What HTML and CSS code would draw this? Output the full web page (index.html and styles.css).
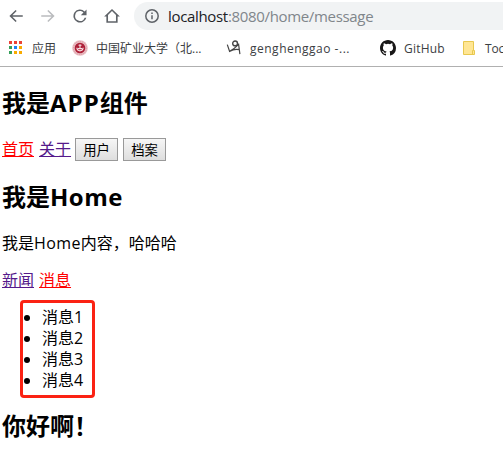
FILE: index.html
```html
<!DOCTYPE html>
<html lang="zh-CN">
<head>
<meta charset="utf-8">
<title>localhost:8080/home/message</title>
<link rel="stylesheet" href="styles.css">
</head>
<body>
<header class="browser">
  <div class="toolbar">
    <svg class="nav-icon" viewBox="0 0 24 24"><path d="M21 11H7.2l5.7-5.7L11.5 4l-8.3 8 8.3 8 1.4-1.4L7.2 13H21z"/></svg>
    <svg class="nav-icon disabled" viewBox="0 0 24 24"><path d="M12.5 4l-1.4 1.4 5.7 5.6H3v2h13.8l-5.7 5.6 1.4 1.4 8.3-8z"/></svg>
    <svg class="nav-icon" viewBox="1 1 22 22"><path d="M17.65 6.35A8 8 0 1 0 19.73 14h-2.08A6 6 0 1 1 12 6c1.66 0 3.14.69 4.22 1.78L13 11h7V4l-2.35 2.35z"/></svg>
    <svg class="nav-icon" viewBox="0 0 24 24"><path fill-rule="evenodd" d="M12 2.5L1.5 12.8h3V21h15v-8.2h3L12 2.5zM12 5.3l5.3 5.3V19H6.7v-8.4L12 5.3z"/></svg>
    <div class="address">
      <svg class="info" viewBox="0 0 16 16"><circle cx="8" cy="8" r="6.2"/><path d="M8 7.2v4M8 4.5v1.5"/></svg>
      <span class="url"><span class="host">localhost</span>:8080/home/message</span>
    </div>
  </div>
  <nav class="bookmarks">
    <a class="bookmark apps"><svg class="icon" viewBox="0 0 14 14"><path fill="#ea4335" d="M0 0h3v3H0zM5 0h3v3H5zM10 0h3v3h-3z"/><path fill="#34a05a" d="M0 5h3v3H0zM0 10h3v3H0z"/><path fill="#1a83f7" d="M5 5h3v3H5z"/><path fill="#f9ab00" d="M10 5h3v3h-3zM5 10h3v3H5zM10 10h3v3h-3z"/></svg><span>应用</span></a>
    <a class="bookmark school"><svg class="icon" viewBox="0 0 16 16"><circle cx="8" cy="8" r="7.8" fill="#e9bcc2"/><circle cx="8" cy="8" r="6.5" fill="none" stroke="#dc9ba4" stroke-dasharray="1 1"/><circle cx="8" cy="8" r="5.3" fill="#ad2038"/><path fill="none" stroke="#f6dfe2" stroke-width="1.1" d="M4.8 7.8c.4 4.1 6 4.1 6.4 0M8 4.2v5M6.5 5.3h3M5.9 8.6h4.2"/></svg><span>中国矿业大学（北...</span></a>
    <a class="bookmark blog"><svg class="icon" viewBox="0 0 16 16"><g fill="none" stroke="#444" stroke-width="1.4"><circle cx="9.1" cy="3.4" r="2.4"/><path d="M1.3 4.6l2.3 6.8c3-1.6 6.2-4 9-7l1.3 9.8M4 11.2c3-2 6-2.3 9.6-1.6" stroke-width="1.2"/></g></svg><span>genghenggao -...</span></a>
    <a class="bookmark github"><svg class="icon" viewBox="0 0 16 16"><path fill="#181717" d="M8 0C3.58 0 0 3.58 0 8c0 3.54 2.29 6.53 5.47 7.59.4.07.55-.17.55-.38 0-.19-.01-.82-.01-1.49-2.01.37-2.53-.49-2.69-.94-.09-.23-.48-.94-.82-1.13-.28-.15-.68-.52-.01-.53.63-.01 1.08.58 1.23.82.72 1.21 1.87.87 2.33.66.07-.52.28-.87.51-1.07-1.78-.2-3.64-.89-3.64-3.95 0-.87.31-1.59.82-2.15-.08-.2-.36-1.02.08-2.12 0 0 .67-.21 2.2.82a7.6 7.6 0 0 1 4 0c1.53-1.04 2.2-.82 2.2-.82.44 1.1.16 1.92.08 2.12.51.56.82 1.27.82 2.15 0 3.07-1.87 3.75-3.65 3.95.29.25.54.73.54 1.48 0 1.07-.01 1.93-.01 2.2 0 .21.15.46.55.38A8.01 8.01 0 0 0 16 8c0-4.42-3.58-8-8-8z"/></svg><span>GitHub</span></a>
    <a class="bookmark folder"><svg class="icon" viewBox="0 0 13 15"><path fill="#ffe694" stroke="#e8c84f" d="M.5.5h10v9h1v4H.5zM9.5 13.5v-4h1"/></svg><span>Toc</span></a>
  </nav>
</header>
<main>
  <h2>我是<span class="app-word">APP</span>组件</h2>
  <div class="links main-links"><a class="active">首页</a><a>关于</a><button>用户</button><button>档案</button></div>
  <h2 class="home-title">我是<span class="home-word">Home</span></h2>
  <p>我是<span class="home-text">Home</span>内容，哈哈哈</p>
  <div class="links"><a>新闻</a><a class="active">消息</a></div>
  <ul><li>消息1</li><li>消息2</li><li>消息3</li><li>消息4</li></ul>
  <h2>你好啊！</h2>
</main>
</body>
</html>
```
FILE: styles.css
```css
* { box-sizing: border-box; }
body {
  margin: 0;
  height: 476px;
  overflow: hidden;
  background: #fff;
  color: #000;
  font: 16px/21px "Open Sans", "Noto Sans CJK SC", sans-serif;
}
.browser { height: 67px; border-bottom: 1px solid #b0b0b0; overflow: hidden; }
.toolbar { display: flex; align-items: center; height: 28px; margin-top: 2px; padding-left: 7px; }
.nav-icon { flex: none; width: 18px; height: 18px; margin-right: 14px; fill: #5f6368; }
.disabled { fill: #babcbe; }
.address {
  display: flex; align-items: center; flex: 1; height: 28px;
  margin-left: -1px; padding-left: 10px;
  border-radius: 14px 0 0 14px; background: #f1f3f4;
}
.info { width: 16px; height: 16px; margin-right: 8px; fill: none; stroke: #5f6368; stroke-width: 1.5; }
.url { color: #80868b; font-size: 15px; letter-spacing: -.33px; white-space: nowrap; }
.host { color: #202124; }
.bookmarks { display: flex; height: 36px; color: #3c4043; font-size: 12px; white-space: nowrap; }
.bookmark { display: flex; flex: none; align-items: center; }
.icon { flex: none; width: 16px; height: 16px; }
.apps { width: 63px; padding-left: 9px; gap: 9px; }
.apps .icon { width: 14px; height: 14px; }
.school { width: 163px; padding-left: 9px; gap: 8px; }
.blog { width: 154px; gap: 8px; letter-spacing: .5px; }
.github { width: 83px; gap: 8px; letter-spacing: .2px; }
.folder .icon { width: 13px; height: 15px; }
.folder { gap: 9px; letter-spacing: -.2px; }
main { padding: 20px 2px 0; }
h2 { height: 32px; margin: 0 0 19px; font-size: 24px; line-height: 32px; white-space: nowrap; }
.app-word { letter-spacing: 1px; }
.home-word { letter-spacing: .5px; }
.home-text { letter-spacing: .4px; }
.links { display: flex; align-items: center; gap: 5px; height: 21px; }
.links a { color: #551a8b; text-decoration: underline; }
.links .active { color: #f00; }
.main-links { height: 23px; margin-bottom: 20px; }
button {
  width: 43px; height: 23px; margin-left: -1px; padding: 0;
  border: 1px solid #999; border-radius: 0;
  background: linear-gradient(#f6f6f6, #dedede);
  color: #000; font: 13.33px/20px "Noto Sans CJK SC", sans-serif;
}
button + button { margin-left: 0; }
.home-title { margin-bottom: 20px; }
p { height: 21px; margin: 0 0 16px; white-space: nowrap; }
ul {
  width: 75px; height: 98px; margin: 9px 0 12px 18px; padding: 4px 0 0 19px;
  border: 3px solid #fb2213; border-radius: 4px;
}
li { height: 21px; white-space: nowrap; }
```
